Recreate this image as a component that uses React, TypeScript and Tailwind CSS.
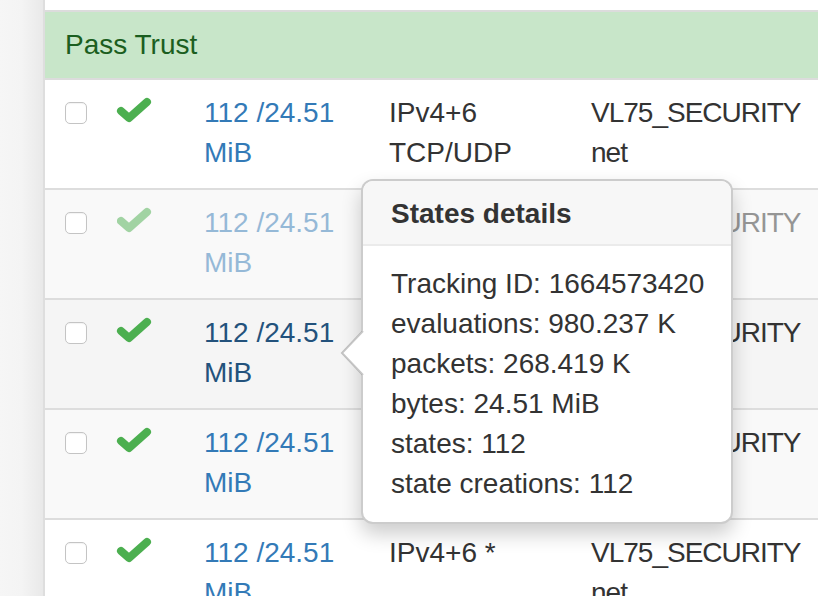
import React from 'react';

type Row = {
  bg: string;
  faded?: boolean;
  hover?: boolean;
  proto: string[];
  iface: string[];
};

const ROWS: Row[] = [
  { bg: 'bg-white', proto: ['IPv4+6', 'TCP/UDP'], iface: ['VL75_SECURITY', 'net'] },
  { bg: 'bg-[#f9f9f9]', faded: true, proto: ['IPv4+6', 'TCP/UDP'], iface: ['VL75_SECURITY', 'net'] },
  { bg: 'bg-[#f5f5f5]', hover: true, proto: ['IPv4+6', 'TCP/UDP'], iface: ['VL75_SECURITY', 'net'] },
  { bg: 'bg-[#f9f9f9]', proto: ['IPv4+6', 'TCP/UDP'], iface: ['VL75_SECURITY', 'net'] },
  { bg: 'bg-white', proto: ['IPv4+6 *'], iface: ['VL75_SECURITY', 'net'] },
];

const DETAILS = [
  'Tracking ID: 1664573420',
  'evaluations: 980.237 K',
  'packets: 268.419 K',
  'bytes: 24.51 MiB',
  'states: 112',
  'state creations: 112',
];

function CheckIcon() {
  return (
    <svg width="40" height="32" viewBox="0 0 40 32" className="block -ml-[2px]">
      <polyline
        points="7,17 15,24 33,8"
        fill="none"
        stroke="#4caf50"
        strokeWidth="8"
        strokeLinecap="round"
        strokeLinejoin="round"
      />
    </svg>
  );
}

function Checkbox() {
  return (
    <div className="w-[22px] h-[22px] rounded-[5px] border-[1.5px] border-[#c4c4c4] bg-white shadow-[inset_0_1px_1px_rgba(0,0,0,0.05)]" />
  );
}

export default function App() {
  return (
    <div
      className="relative w-[818px] h-[596px] overflow-hidden flex text-[28px] leading-[40px] text-[#333]"
      style={{ fontFamily: '"Liberation Sans", Arial, sans-serif' }}
    >
      {/* sidebar edge */}
      <div className="w-[43px] shrink-0 bg-gradient-to-r from-[#f6f6f6] via-[#f4f4f4] to-[#e9e9e9]" />

      {/* table */}
      <div className="flex-1 border-l-2 border-[#dedede] bg-white min-w-0">
        <div className="h-[10px] bg-white" />
        <div className="h-[70px] border-y-2 border-[#dcdcdc] bg-[#c8e6c9] pl-[20px] flex items-center">
          <span className="text-[#1b5e20]">Pass Trust</span>
        </div>

        {ROWS.map((row, i) => (
          <div
            key={i}
            className={`flex h-[110px] border-b-2 border-[#dddddd] pt-[13px] ${row.bg}`}
          >
            <div className="w-[71px] shrink-0 pl-[20px] pt-[9px]">
              <Checkbox />
            </div>
            <div className={`flex ${row.faded ? 'opacity-50' : ''}`}>
              <div className="w-[88px] shrink-0 pt-[1px]">
                <CheckIcon />
              </div>
              <div
                className={`w-[185px] shrink-0 ${row.hover ? 'text-[#23527c]' : 'text-[#337ab7]'}`}
              >
                <div>112 /24.51</div>
                <div>MiB</div>
              </div>
              <div className="w-[202px] shrink-0">
                {row.proto.map((p) => (
                  <div key={p}>{p}</div>
                ))}
              </div>
              <div className="whitespace-nowrap tracking-[-1px]">
                {row.iface.map((p) => (
                  <div key={p}>{p}</div>
                ))}
              </div>
            </div>
          </div>
        ))}
      </div>

      {/* popover */}
      <div className="absolute left-[361px] top-[179px] w-[372px] rounded-[12px] border-2 border-black/20 bg-white shadow-[0_10px_20px_rgba(0,0,0,0.2)]">
        <svg
          width="24"
          height="46"
          viewBox="0 0 24 46"
          className="absolute left-[-23px] top-[149px]"
        >
          <polygon points="23,0 2,23 23,46" fill="white" />
          <polyline points="23,1 2,23 23,45" fill="none" stroke="rgba(0,0,0,0.22)" strokeWidth="2" />
        </svg>
        <div className="rounded-t-[10px] bg-[#f7f7f7] border-b-2 border-[#ebebeb] px-[28px] pt-[13px] pb-[10px] font-bold">
          States details
        </div>
        <div className="px-[28px] pt-[18px] pb-[18px]">
          {DETAILS.map((d) => (
            <div key={d} className="whitespace-nowrap">
              {d}
            </div>
          ))}
        </div>
      </div>
    </div>
  );
}
